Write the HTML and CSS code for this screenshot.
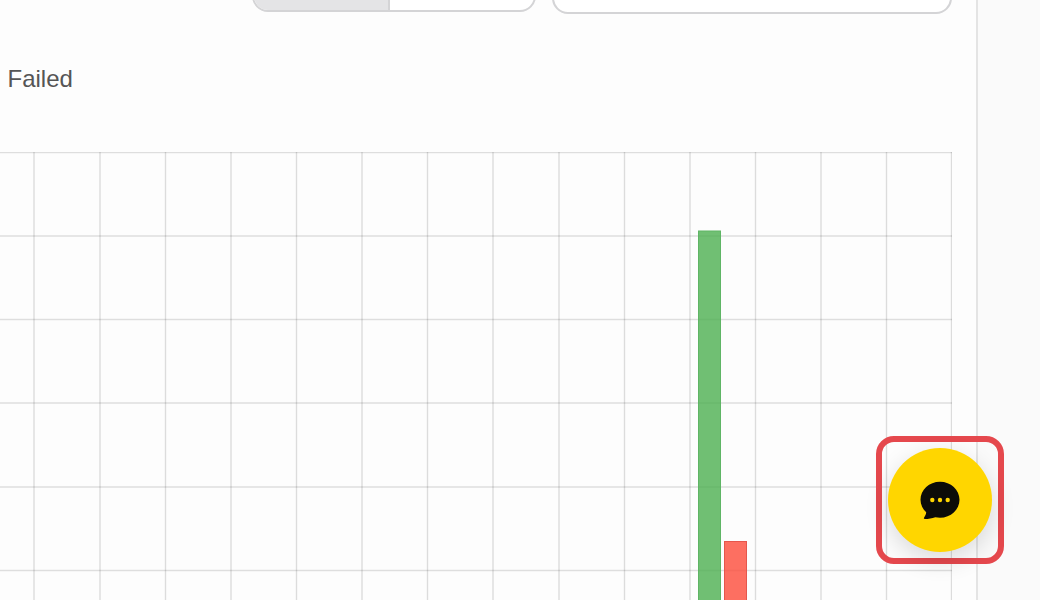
FILE: index.html
```html
<!DOCTYPE html>
<html lang="en">
<head>
<meta charset="utf-8">
<title>Chart</title>
<link rel="stylesheet" href="styles.css">
</head>
<body>
<div class="page">
  <main class="main">
    <div class="controls">
      <div class="toggle">
        <div class="toggle-on"></div>
        <div class="toggle-off"></div>
      </div>
      <div class="select"></div>
    </div>
    <div class="legend">Failed</div>
    <svg class="chart" width="952" height="448" viewBox="0 0 952 448">
      <g class="grid-h">
        <line x1="0" x2="952" y1="0.5" y2="0.5"/>
        <line x1="0" x2="952" y1="84" y2="84"/>
        <line x1="0" x2="952" y1="167.5" y2="167.5"/>
        <line x1="0" x2="952" y1="251" y2="251"/>
        <line x1="0" x2="952" y1="335" y2="335"/>
        <line x1="0" x2="952" y1="418.5" y2="418.5"/>
      </g>
      <g class="grid-v">
        <line x1="34" x2="34" y1="0" y2="448"/>
        <line x1="100" x2="100" y1="0" y2="448"/>
        <line x1="165.500" x2="165.500" y1="0" y2="448"/>
        <line x1="231" x2="231" y1="0" y2="448"/>
        <line x1="296.500" x2="296.500" y1="0" y2="448"/>
        <line x1="362" x2="362" y1="0" y2="448"/>
        <line x1="427.500" x2="427.500" y1="0" y2="448"/>
        <line x1="493" x2="493" y1="0" y2="448"/>
        <line x1="559" x2="559" y1="0" y2="448"/>
        <line x1="624.500" x2="624.500" y1="0" y2="448"/>
        <line x1="690" x2="690" y1="0" y2="448"/>
        <line x1="755.500" x2="755.500" y1="0" y2="448"/>
        <line x1="821" x2="821" y1="0" y2="448"/>
        <line x1="886.500" x2="886.500" y1="0" y2="448"/>
        <line x1="951.500" x2="951.500" y1="0" y2="448"/>
      </g>
      <rect class="bar-ok" x="698.500" y="79" width="22" height="370"/>
      <rect class="bar-fail" x="724.500" y="389.500" width="22" height="60"/>
    </svg>
  </main>
  <aside class="side"></aside>
</div>
<div class="chat-highlight">
  <button class="chat-btn" type="button" aria-label="Chat">
    <svg width="42" height="40" viewBox="0 0 42 40">
      <path class="bubble" d="M21 1.700C31.800 1.700 40.500 9.800 40.500 19.700C40.500 29.600 31.800 37.700 21 37.700C19.400 37.700 17.800 37.500 16.300 37.200C13 38.400 9.500 39 5.800 39C5 39 4.600 38.400 5 37.800C6.200 36 7.200 33.800 7.200 32.300C3.800 29 1.500 24.600 1.500 19.700C1.500 9.800 10.200 1.700 21 1.700Z"/>
      <circle class="dot" cx="13.300" cy="20" r="2.200"/>
      <circle class="dot" cx="21" cy="20" r="2.200"/>
      <circle class="dot" cx="28.700" cy="20" r="2.200"/>
    </svg>
  </button>
</div>
</body>
</html>
```
FILE: styles.css
```css
* {
  box-sizing: border-box;
}

html,
body {
  margin: 0;
  height: 100%;
  overflow: hidden;
  background: #fafafa;
}

body {
  font-family: "Liberation Sans", Arial, sans-serif;
}

.page {
  display: flex;
  height: 600px;
}

.main {
  flex: 0 0 978px;
  height: 600px;
  overflow: hidden;
  background: #fdfdfd;
  border-right: 2px solid #e4e4e4;
}

.controls {
  display: flex;
  gap: 16px;
  align-items: flex-start;
  height: 14px;
  padding-left: 252px;
}

.toggle {
  display: flex;
  flex: 0 0 284px;
  height: 40px;
  margin-top: -28px;
  overflow: hidden;
  background: #fff;
  border: 2px solid #d4d4d6;
  border-radius: 16px;
}

.toggle-on {
  flex: 0 0 136px;
  background: #e4e4e6;
  border-right: 2px solid #d4d4d6;
}

.toggle-off {
  flex: 1;
}

.select {
  flex: 0 0 400px;
  height: 42px;
  margin-top: -28px;
  background: #fff;
  border: 2px solid #d4d4d6;
  border-radius: 16px;
}

.legend {
  height: 138px;
  padding: 51px 0 0 7.500px;
  font-size: 24px;
  line-height: 27px;
  color: #555;
}

.chart {
  display: block;
}

.grid-h line {
  stroke: #000;
  stroke-opacity: 0.12;
  stroke-width: 1.400;
}

.grid-v line {
  stroke: #000;
  stroke-opacity: 0.13;
  stroke-width: 1.400;
}

.bar-ok {
  fill: #4caf50;
  fill-opacity: 0.8;
  stroke: #5fb565;
  stroke-width: 1;
}

.bar-fail {
  fill: #fd4b3a;
  fill-opacity: 0.8;
  stroke: #e5564c;
  stroke-width: 1;
}

.chat-highlight {
  position: fixed;
  left: 876px;
  top: 436px;
  display: flex;
  align-items: center;
  justify-content: center;
  width: 128px;
  height: 128px;
  border: 6px solid #e5484d;
  border-radius: 18px;
}

.chat-btn {
  display: flex;
  align-items: center;
  justify-content: center;
  width: 104px;
  height: 104px;
  padding: 0;
  background: #ffd600;
  border: 0;
  border-radius: 50%;
  box-shadow: 0 8px 24px rgba(0, 0, 0, 0.14);
}

.bubble {
  fill: #0c0c08;
}

.dot {
  fill: #ffd600;
}
```
